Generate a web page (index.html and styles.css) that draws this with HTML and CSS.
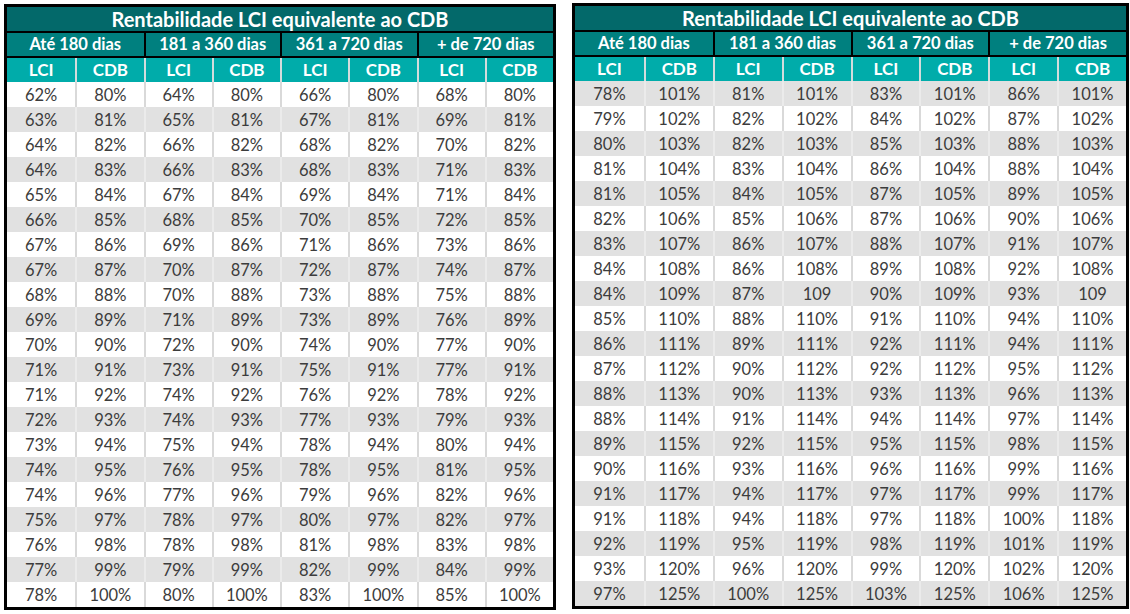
FILE: index.html
```html
<!DOCTYPE html>
<html lang="pt-BR">
<head>
<meta charset="utf-8">
<title>Rentabilidade LCI equivalente ao CDB</title>
<link rel="stylesheet" href="styles.css">
</head>
<body>
<div class="page">
<table class="grid grid-left">
<thead>
<tr><th class="title" colspan="8">Rentabilidade LCI equivalente ao CDB</th></tr>
<tr class="groups"><th colspan="2">Até 180 dias</th><th colspan="2">181 a 360 dias</th><th colspan="2">361 a 720 dias</th><th colspan="2">+ de 720 dias</th></tr>
<tr class="cols"><th>LCI</th><th>CDB</th><th>LCI</th><th>CDB</th><th>LCI</th><th>CDB</th><th>LCI</th><th>CDB</th></tr>
</thead>
<tbody class="start-white">
<tr><td>62%</td><td>80%</td><td>64%</td><td>80%</td><td>66%</td><td>80%</td><td>68%</td><td>80%</td></tr>
<tr><td>63%</td><td>81%</td><td>65%</td><td>81%</td><td>67%</td><td>81%</td><td>69%</td><td>81%</td></tr>
<tr><td>64%</td><td>82%</td><td>66%</td><td>82%</td><td>68%</td><td>82%</td><td>70%</td><td>82%</td></tr>
<tr><td>64%</td><td>83%</td><td>66%</td><td>83%</td><td>68%</td><td>83%</td><td>71%</td><td>83%</td></tr>
<tr><td>65%</td><td>84%</td><td>67%</td><td>84%</td><td>69%</td><td>84%</td><td>71%</td><td>84%</td></tr>
<tr><td>66%</td><td>85%</td><td>68%</td><td>85%</td><td>70%</td><td>85%</td><td>72%</td><td>85%</td></tr>
<tr><td>67%</td><td>86%</td><td>69%</td><td>86%</td><td>71%</td><td>86%</td><td>73%</td><td>86%</td></tr>
<tr><td>67%</td><td>87%</td><td>70%</td><td>87%</td><td>72%</td><td>87%</td><td>74%</td><td>87%</td></tr>
<tr><td>68%</td><td>88%</td><td>70%</td><td>88%</td><td>73%</td><td>88%</td><td>75%</td><td>88%</td></tr>
<tr><td>69%</td><td>89%</td><td>71%</td><td>89%</td><td>73%</td><td>89%</td><td>76%</td><td>89%</td></tr>
<tr><td>70%</td><td>90%</td><td>72%</td><td>90%</td><td>74%</td><td>90%</td><td>77%</td><td>90%</td></tr>
<tr><td>71%</td><td>91%</td><td>73%</td><td>91%</td><td>75%</td><td>91%</td><td>77%</td><td>91%</td></tr>
<tr><td>71%</td><td>92%</td><td>74%</td><td>92%</td><td>76%</td><td>92%</td><td>78%</td><td>92%</td></tr>
<tr><td>72%</td><td>93%</td><td>74%</td><td>93%</td><td>77%</td><td>93%</td><td>79%</td><td>93%</td></tr>
<tr><td>73%</td><td>94%</td><td>75%</td><td>94%</td><td>78%</td><td>94%</td><td>80%</td><td>94%</td></tr>
<tr><td>74%</td><td>95%</td><td>76%</td><td>95%</td><td>78%</td><td>95%</td><td>81%</td><td>95%</td></tr>
<tr><td>74%</td><td>96%</td><td>77%</td><td>96%</td><td>79%</td><td>96%</td><td>82%</td><td>96%</td></tr>
<tr><td>75%</td><td>97%</td><td>78%</td><td>97%</td><td>80%</td><td>97%</td><td>82%</td><td>97%</td></tr>
<tr><td>76%</td><td>98%</td><td>78%</td><td>98%</td><td>81%</td><td>98%</td><td>83%</td><td>98%</td></tr>
<tr><td>77%</td><td>99%</td><td>79%</td><td>99%</td><td>82%</td><td>99%</td><td>84%</td><td>99%</td></tr>
<tr><td>78%</td><td>100%</td><td>80%</td><td>100%</td><td>83%</td><td>100%</td><td>85%</td><td>100%</td></tr>
</tbody>
</table>

<table class="grid grid-right">
<thead>
<tr><th class="title" colspan="8">Rentabilidade LCI equivalente ao CDB</th></tr>
<tr class="groups"><th colspan="2">Até 180 dias</th><th colspan="2">181 a 360 dias</th><th colspan="2">361 a 720 dias</th><th colspan="2">+ de 720 dias</th></tr>
<tr class="cols"><th>LCI</th><th>CDB</th><th>LCI</th><th>CDB</th><th>LCI</th><th>CDB</th><th>LCI</th><th>CDB</th></tr>
</thead>
<tbody class="start-gray">
<tr><td>78%</td><td>101%</td><td>81%</td><td>101%</td><td>83%</td><td>101%</td><td>86%</td><td>101%</td></tr>
<tr><td>79%</td><td>102%</td><td>82%</td><td>102%</td><td>84%</td><td>102%</td><td>87%</td><td>102%</td></tr>
<tr><td>80%</td><td>103%</td><td>82%</td><td>103%</td><td>85%</td><td>103%</td><td>88%</td><td>103%</td></tr>
<tr><td>81%</td><td>104%</td><td>83%</td><td>104%</td><td>86%</td><td>104%</td><td>88%</td><td>104%</td></tr>
<tr><td>81%</td><td>105%</td><td>84%</td><td>105%</td><td>87%</td><td>105%</td><td>89%</td><td>105%</td></tr>
<tr><td>82%</td><td>106%</td><td>85%</td><td>106%</td><td>87%</td><td>106%</td><td>90%</td><td>106%</td></tr>
<tr><td>83%</td><td>107%</td><td>86%</td><td>107%</td><td>88%</td><td>107%</td><td>91%</td><td>107%</td></tr>
<tr><td>84%</td><td>108%</td><td>86%</td><td>108%</td><td>89%</td><td>108%</td><td>92%</td><td>108%</td></tr>
<tr><td>84%</td><td>109%</td><td>87%</td><td>109</td><td>90%</td><td>109%</td><td>93%</td><td>109</td></tr>
<tr><td>85%</td><td>110%</td><td>88%</td><td>110%</td><td>91%</td><td>110%</td><td>94%</td><td>110%</td></tr>
<tr><td>86%</td><td>111%</td><td>89%</td><td>111%</td><td>92%</td><td>111%</td><td>94%</td><td>111%</td></tr>
<tr><td>87%</td><td>112%</td><td>90%</td><td>112%</td><td>92%</td><td>112%</td><td>95%</td><td>112%</td></tr>
<tr><td>88%</td><td>113%</td><td>90%</td><td>113%</td><td>93%</td><td>113%</td><td>96%</td><td>113%</td></tr>
<tr><td>88%</td><td>114%</td><td>91%</td><td>114%</td><td>94%</td><td>114%</td><td>97%</td><td>114%</td></tr>
<tr><td>89%</td><td>115%</td><td>92%</td><td>115%</td><td>95%</td><td>115%</td><td>98%</td><td>115%</td></tr>
<tr><td>90%</td><td>116%</td><td>93%</td><td>116%</td><td>96%</td><td>116%</td><td>99%</td><td>116%</td></tr>
<tr><td>91%</td><td>117%</td><td>94%</td><td>117%</td><td>97%</td><td>117%</td><td>99%</td><td>117%</td></tr>
<tr><td>91%</td><td>118%</td><td>94%</td><td>118%</td><td>97%</td><td>118%</td><td>100%</td><td>118%</td></tr>
<tr><td>92%</td><td>119%</td><td>95%</td><td>119%</td><td>98%</td><td>119%</td><td>101%</td><td>119%</td></tr>
<tr><td>93%</td><td>120%</td><td>96%</td><td>120%</td><td>99%</td><td>120%</td><td>102%</td><td>120%</td></tr>
<tr><td>97%</td><td>125%</td><td>100%</td><td>125%</td><td>103%</td><td>125%</td><td>106%</td><td>125%</td></tr>
</tbody>
</table>
</div>
</body>
</html>
```

FILE: styles.css
```css
html, body {
  margin: 0;
  padding: 0;
  background: #ffffff;
}

body {
  font-family: Lato, "Open Sans", "Liberation Sans", sans-serif;
}

.page {
  display: flex;
  align-items: flex-start;
  gap: 16px;
  padding: 4px 0 0 4px;
}

.grid {
  border-collapse: separate;
  border-spacing: 0;
  border: 3px solid #000;
  table-layout: fixed;
}

.grid-left {
  width: 552px;
}

.grid-right {
  width: 557px;
  margin-top: -1px;
}

.grid th {
  padding: 0;
  color: #ffffff;
  font-weight: 700;
  text-align: center;
  white-space: nowrap;
}

.grid .title {
  height: 24px;
  background: #03696a;
  font-size: 20px;
  line-height: 24px;
  border-bottom: 2px solid #000;
}

.grid .groups th {
  height: 23px;
  background: #00807f;
  font-size: 16.5px;
  line-height: 23px;
  border-bottom: 2px solid #000;
}

.grid .groups th + th {
  border-left: 2px solid #000;
}

.grid .cols th {
  height: 24px;
  background: #00acaa;
  font-size: 17px;
  line-height: 24px;
}

.grid .cols th + th {
  border-left: 2px solid #d4dcdc;
}

.grid td {
  height: 24px;
  padding: 1px 0 0;
  text-align: center;
  font-size: 16.5px;
  line-height: 24px;
  color: #3c3c3c;
  white-space: nowrap;
}

.grid td + td {
  border-left: 2px solid #d9d9d9;
}

.start-white tr:nth-child(even) td,
.start-gray tr:nth-child(odd) td {
  background: #e1e1e1;
}

.start-white tr:nth-child(even) td + td,
.start-gray tr:nth-child(odd) td + td {
  border-left-color: #ebebeb;
}
```
